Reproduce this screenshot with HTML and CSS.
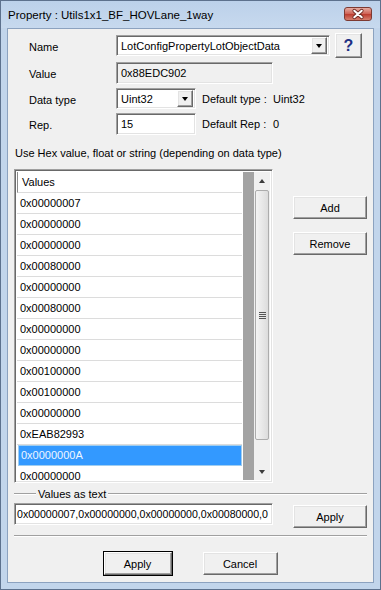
FILE: index.html
```html
<!DOCTYPE html>
<html lang="en">
<head>
  <meta charset="UTF-8" />
  <title>Property : Utils1x1_BF_HOVLane_1way</title>
  <link rel="stylesheet" href="styles.css">
</head>
<body>
  <div class="window">
    <div class="titlebar">
      <span class="title">Property : Utils1x1_BF_HOVLane_1way</span>
      <button class="close" aria-label="Close">
        <svg width="28" height="14" viewBox="0 0 28 14">
          <path d="M10 3.5 L18 10.5 M18 3.5 L10 10.5" stroke="#6e2a22" stroke-width="4" stroke-linecap="round" />
          <path d="M10 3.5 L18 10.5 M18 3.5 L10 10.5" stroke="#ffffff" stroke-width="2.2" stroke-linecap="round" />
        </svg>
      </button>
    </div>

    <div class="client">
      <div class="form">
        <div class="row row-name">
          <span class="label">Name</span>
          <div class="combo combo-name sunken">
            <span class="combo-text">LotConfigPropertyLotObjectData</span>
            <span class="drop raised"><i class="arrow-down"></i></span>
          </div>
          <button class="btn help">?</button>
        </div>
        <div class="row row-value">
          <span class="label">Value</span>
          <div class="field field-value sunken readonly">0x88EDC902</div>
        </div>
        <div class="row row-type">
          <span class="label">Data type</span>
          <div class="combo combo-type sunken">
            <span class="combo-text">Uint32</span>
            <span class="drop raised"><i class="arrow-down"></i></span>
          </div>
          <span class="default-label">Default type :</span>
          <span class="default-value">Uint32</span>
        </div>
        <div class="row row-rep">
          <span class="label">Rep.</span>
          <div class="field field-rep sunken">15</div>
          <span class="default-label">Default Rep :</span>
          <span class="default-value">0</span>
        </div>
      </div>

      <p class="hint">Use Hex value, float or string (depending on data type)</p>

      <div class="list-row">
        <div class="list sunken">
          <div class="list-body">
            <div class="list-header">Values</div>
            <div class="item">0x00000007</div>
            <div class="item">0x00000000</div>
            <div class="item">0x00000000</div>
            <div class="item">0x00080000</div>
            <div class="item">0x00000000</div>
            <div class="item">0x00080000</div>
            <div class="item">0x00000000</div>
            <div class="item">0x00000000</div>
            <div class="item">0x00100000</div>
            <div class="item">0x00100000</div>
            <div class="item">0x00000000</div>
            <div class="item">0xEAB82993</div>
            <div class="item selected">0x0000000A</div>
            <div class="item">0x00000000</div>
          </div>
          <div class="list-gutter"></div>
          <div class="scrollbar">
            <div class="sb-arrow"><i class="sb-up"></i></div>
            <div class="sb-thumb"><span class="grip"></span></div>
            <div class="sb-track"></div>
            <div class="sb-arrow"><i class="sb-down"></i></div>
          </div>
        </div>
        <div class="side-buttons">
          <button class="btn side">Add</button>
          <button class="btn side">Remove</button>
        </div>
      </div>

      <div class="group-title">
        <span class="etched lead"></span>
        <span class="group-text">Values as text</span>
        <span class="etched fill"></span>
      </div>
      <div class="text-row">
        <div class="field field-text sunken">0x00000007,0x00000000,0x00000000,0x00080000,0</div>
        <button class="btn side apply-text">Apply</button>
      </div>

      <div class="etched separator"></div>

      <div class="footer">
        <button class="btn footer-apply default">Apply</button>
        <button class="btn footer-cancel">Cancel</button>
      </div>
    </div>
  </div>
</body>
</html>
```
FILE: styles.css
```css
/* classic dialog look: grey client, 3D borders */
* {
  box-sizing: border-box;
}
body {
  margin: 0;
  font-family: "Liberation Sans", Arial, sans-serif;
  font-size: 11px;
  color: #000;
  background: #fff;
}
.window {
  width: 381px;
  height: 590px;
  display: flex;
  flex-direction: column;
  background: #c2d5eb;
  border: 1px solid #5d718d;
  padding: 0 6px 6px;
}
.titlebar {
  height: 27px;
  display: flex;
  align-items: center;
  justify-content: space-between;
  background: linear-gradient(#bcd1ea, #c7d9ee);
  margin: 0 -6px;
  padding: 0 7px;
}
.title {
  font-size: 11.5px;
  color: #000;
}
.close {
  align-self: flex-start;
  margin-top: 6px;
  margin-right: 1px;
  width: 28px;
  height: 14px;
  padding: 0;
  border: 1px solid #7d3a32;
  border-radius: 3px;
  background: linear-gradient(#e6aca2, #cf6356 48%, #bd3c2f 52%, #d6806f);
  display: flex;
  align-items: center;
  justify-content: center;
}
.close svg {
  display: block;
}
.client {
  flex: 1;
  background: #f0f0f0;
  border: 1px solid #8ca2bf;
  padding: 0 6px;
  display: flex;
  flex-direction: column;
}

/* 3D borders */
.sunken {
  border: 1px solid;
  border-color: #a0a0a0 #fff #fff #a0a0a0;
  box-shadow: inset 1px 1px #696969, inset -1px -1px #e3e3e3;
  background: #fff;
}
.raised,
.btn {
  border: 1px solid;
  border-color: #fff #696969 #696969 #fff;
  box-shadow: inset -1px -1px #a0a0a0, inset 1px 1px #e3e3e3;
  background: #f0f0f0;
}
.btn {
  font-family: inherit;
  font-size: 11px;
  color: #000;
  padding: 0;
}
.btn.default {
  box-shadow: 0 0 0 1px #000, inset -1px -1px #a0a0a0, inset 1px 1px #e3e3e3;
}

/* form rows */
.form {
  padding-top: 4px;
  display: flex;
  flex-direction: column;
  gap: 4px;
}
.row {
  display: flex;
  align-items: center;
}
.row-name { height: 25px; }
.row-value { height: 22px; }
.row-type { height: 21px; }
.row-rep { height: 22px; }
.label {
  width: 102px;
  padding-left: 15px;
  padding-top: 2px;
}
.combo {
  display: flex;
  align-items: center;
  height: 21px;
  padding: 2px;
}
.combo-name { width: 214px; }
.combo-type { width: 80px; }
.combo-text {
  flex: 1;
  padding-left: 2px;
}
.drop {
  width: 16px;
  height: 17px;
  display: flex;
  align-items: center;
  justify-content: center;
}
.arrow-down {
  width: 0;
  height: 0;
  border-left: 3.5px solid transparent;
  border-right: 3.5px solid transparent;
  border-top: 4px solid #000;
}
.help {
  width: 27px;
  height: 25px;
  margin-left: 5px;
  font-size: 16px;
  font-weight: bold;
  color: #1d2f84;
}
.field {
  display: flex;
  align-items: center;
  padding: 0 4px;
}
.field.readonly {
  background: #f0f0f0;
}
.field-value {
  width: 157px;
  height: 22px;
}
.field-rep {
  width: 80px;
  height: 22px;
}
.default-label {
  margin-left: 6px;
  width: 71px;
}
.hint {
  margin: 11px 0 0 1px;
  line-height: 14px;
}

/* values list */
.list-row {
  display: flex;
  gap: 20px;
  margin-top: 9px;
}
.list {
  width: 259px;
  height: 314px;
  padding: 2px;
  display: flex;
}
.list-body {
  flex: 1;
  overflow: hidden;
  padding-right: 1px;
}
.list-header {
  height: 21px;
  line-height: 21px;
  padding-left: 4px;
  border-left: 1px solid #8a8a8a;
  border-bottom: 1px solid #dcdcdc;
}
.item {
  height: 21px;
  line-height: 20px;
  padding-left: 3px;
  border-bottom: 1px solid #dcdcdc;
  white-space: nowrap;
}
.item.selected {
  background: #3399ff;
  color: #eef6ff;
  border: 1px solid #9fcdf0;
  line-height: 18px;
  margin: 0 0 0 1px;
  padding-left: 2px;
}
.list-gutter {
  width: 11px;
  background: #a3a3a3;
}
.scrollbar {
  width: 16px;
  display: flex;
  flex-direction: column;
  background: #f0f0f0;
}
.sb-arrow {
  height: 17px;
  display: flex;
  align-items: center;
  justify-content: center;
}
.sb-up,
.sb-down {
  width: 0;
  height: 0;
  border-left: 3.5px solid transparent;
  border-right: 3.5px solid transparent;
}
.sb-up {
  border-bottom: 4px solid #3c3c3c;
}
.sb-down {
  border-top: 4px solid #3c3c3c;
}
.sb-thumb {
  height: 250px;
  margin: 1px 1px 0 1px;
  border: 1px solid #acacac;
  border-radius: 2px;
  background: linear-gradient(to right, #f4f4f4, #e6e6e6 60%, #dcdcdc);
  display: flex;
  align-items: center;
  justify-content: center;
}
.grip {
  width: 7px;
  height: 7px;
  background: repeating-linear-gradient(#555 0 1px, transparent 1px 2px);
}
.sb-track {
  flex: 1;
}
.side-buttons {
  display: flex;
  flex-direction: column;
  gap: 13px;
  margin-top: 27px;
}
.btn.side {
  width: 74px;
  height: 23px;
  flex-shrink: 0;
}

/* values as text */
.etched {
  border-top: 1px solid #a0a0a0;
  border-bottom: 1px solid #fff;
  height: 2px;
}
.group-title {
  display: flex;
  align-items: center;
  margin-top: 4px;
  height: 14px;
}
.lead {
  width: 22px;
}
.fill {
  flex: 1;
}
.group-text {
  padding: 0 2px;
}
.text-row {
  display: flex;
  gap: 20px;
  margin-top: 2px;
  align-items: flex-start;
}
.field-text {
  width: 259px;
  flex-shrink: 0;
  height: 22px;
  padding-left: 2px;
  padding-right: 0;
  font-size: 10.6px;
  white-space: nowrap;
  overflow: hidden;
}
.apply-text {
  margin-top: 2px;
}
.separator {
  margin-top: 7px;
}
.footer {
  display: flex;
  justify-content: center;
  gap: 31px;
  margin-top: 15px;
}
.footer .btn {
  height: 23px;
}
.footer-apply {
  width: 68px;
}
.footer-cancel {
  width: 75px;
}
```
